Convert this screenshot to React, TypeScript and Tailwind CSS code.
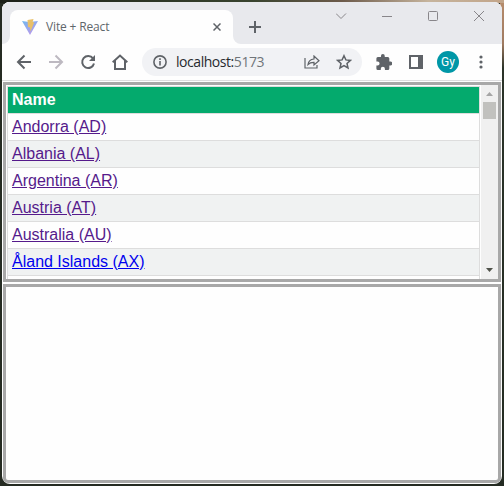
import React from "react";

const countries = [
  { name: "Andorra (AD)", visited: true },
  { name: "Albania (AL)", visited: true },
  { name: "Argentina (AR)", visited: true },
  { name: "Austria (AT)", visited: true },
  { name: "Australia (AU)", visited: true },
  { name: "Åland Islands (AX)", visited: false },
];

function ViteLogo() {
  return (
    <svg width="16" height="16" viewBox="0 0 16 16" className="shrink-0">
      <defs>
        <linearGradient id="v" x1="0" y1="0" x2=".6" y2="1">
          <stop offset="0" stopColor="#72b8ef" />
          <stop offset="1" stopColor="#b99aea" />
        </linearGradient>
      </defs>
      <path d="M0 2 L7 3 L16 2 L8 16 Z" fill="url(#v)" />
      <path d="M5.500 1 L11.500 0 L10.700 3 L12.200 3.500 L8.500 12.500 L8 8.500 L6 8 Z" fill="#e9c069" />
    </svg>
  );
}

function TitleBar() {
  return (
    <div className="flex h-[42px] shrink-0 bg-[#e8e9ed]">
      <div className="h-[42px] w-2 shrink-0 bg-[#fefefe]">
        <div className="h-[42px] w-2 rounded-br-lg bg-[#e8e9ed]" />
      </div>
      <div className="mt-2 flex h-[34px] w-[223px] shrink-0 items-center rounded-t-lg bg-[#fefefe] pl-3 pr-3">
        <ViteLogo />
        <span className="ml-2 flex-1 whitespace-nowrap font-['Open_Sans','Noto_Sans',sans-serif] text-[12px] leading-4 tracking-[-0.15px] text-[#5f666b]">
          Vite + React
        </span>
        <svg width="8" height="8" viewBox="0 0 8 8" stroke="#5f6368" strokeWidth="1.5">
          <path d="M.5 .5 L7.5 7.5 M7.5 .5 L.5 7.5" />
        </svg>
      </div>
      <div className="h-[42px] w-2 shrink-0 bg-[#fefefe]">
        <div className="h-[42px] w-2 rounded-bl-lg bg-[#e8e9ed]" />
      </div>
      <svg width="12" height="12" viewBox="0 0 12 12" stroke="#5f6368" strokeWidth="2" className="ml-2 mt-[19px] shrink-0">
        <path d="M6 0V12M0 6H12" />
      </svg>
      <svg width="150" height="12" viewBox="0 0 150 12" fill="none" stroke="#88868a" className="ml-[75px] mt-2 shrink-0">
        <path d="M0 3.5 L5 8.5 L10 3.5 M46 6.5H56" />
        <rect x="92.5" y="1.500" width="9" height="9" rx="1" />
        <path d="M138 1 L148 11 M148 1 L138 11" />
      </svg>
    </div>
  );
}

function Toolbar() {
  return (
    <div className="flex h-9 shrink-0 items-center bg-[#fefefe] pl-[11px]">
      <svg width="116" height="24" viewBox="13 50 116 24" fill="none" stroke="#5f6368" strokeWidth="2" className="shrink-0">
        <path d="M31 62H18.5 M24.5 55.5L18 62L24.5 68.5" />
        <path d="M49 62H61.5 M55.5 55.5L62 62L55.5 68.5" stroke="#bdb9c1" />
        <path d="M93 58.4A6 6 0 1 0 94 63.5" />
        <path d="M95 55V61H89Z" fill="#5f6368" stroke="none" />
        <path d="M112.700 62.2L120 55.500L127.300 62.2M115 60.500V69H125V60.500" />
      </svg>
      <div className="ml-[13px] flex h-7 w-[220px] shrink-0 items-center rounded-full bg-[#f1f2f5] pl-[11px]">
        <svg width="14" height="14" viewBox="0 0 14 14" fill="none" stroke="#5f6368" strokeWidth="1.6">
          <circle cx="7" cy="7" r="6.1" />
          <path d="M7 6V10.5M7 3.3V4.9" />
        </svg>
        <span className="ml-[9px] whitespace-nowrap font-['Open_Sans','Noto_Sans',sans-serif] text-[14px] leading-5 tracking-[-0.45px] text-[#262a2e]">
          localhost:<span className="text-[#70757a]">5173</span>
        </span>
        <svg width="16" height="14" viewBox="0 0 16 14" fill="none" stroke="#5f6368" strokeWidth="1.2" className="ml-auto">
          <path d="M1 3V13H13V10" />
          <path d="M4 9.5Q4.7 4.5 10 4V1L15 5.7L10 10V7.3Q6.2 7.2 4 9.5Z" />
        </svg>
        <svg width="16" height="16" viewBox="0 0 16 16" fill="none" stroke="#5f6368" strokeWidth="1.5" className="ml-4 mr-[10px]">
          <path d="M8 1.7L9.9 5.9L14.4 6.4L11 9.5L12 14L8 11.6L4 14L5 9.5L1.6 6.4L6.1 5.9Z" />
        </svg>
      </div>
      <svg width="16" height="16" viewBox="2 1 20 21" fill="#5f6368" className="ml-[14px] shrink-0">
        <path d="M20.5 11H19V7a2 2 0 0 0-2-2h-4V3.500a2.500 2.500 0 0 0-5 0V5H4a2 2 0 0 0-2 2v3.800h1.500a2.700 2.700 0 0 1 0 5.400H2V20a2 2 0 0 0 2 2h3.800v-1.500a2.700 2.700 0 0 1 5.400 0V22H17a2 2 0 0 0 2-2v-4h1.500a2.500 2.500 0 0 0 0-5z" />
      </svg>
      <svg width="14" height="14" viewBox="0 0 14 14" className="ml-[17px] shrink-0">
        <path d="M1 1H13V13H1Z" fill="none" stroke="#5f6368" strokeWidth="2" />
        <path d="M9 1H13V13H9Z" fill="#5f6368" />
      </svg>
      <div className="ml-[14px] flex h-[22px] w-[22px] shrink-0 items-center justify-center rounded-full bg-[#0097a7] pb-px font-['Roboto',sans-serif] text-[12px] leading-none text-white">
        Gy
      </div>
      <svg width="4" height="14" viewBox="0 0 4 14" fill="#5f6368" className="ml-5 shrink-0">
        <circle cx="2" cy="2" r="1.6" />
        <circle cx="2" cy="7" r="1.6" />
        <circle cx="2" cy="12" r="1.6" />
      </svg>
    </div>
  );
}

function CountryFrame() {
  return (
    <div className="flex h-[200px] shrink-0 overflow-hidden border-[3px] border-[#a8a8a8] bg-[#fefefe] pl-px font-['Liberation_Sans',Arial,sans-serif] text-[16px]">
      <div className="mt-px h-[193px] w-[473px] shrink-0 overflow-hidden border-x border-t border-[#ddd]">
        <div className="h-[27px] border-b border-[#ddd] bg-[#04aa6d] pl-1 font-bold leading-[26px] text-white">Name</div>
        {countries.map((country) => (
          <div key={country.name} className="h-[27px] border-b border-[#ddd] pl-1 leading-[26px] even:bg-[#fefefe] odd:bg-[#f0f2f2]">
            <a className={country.visited ? "text-[#551a8b] underline" : "text-[#0000ee] underline"}>{country.name}</a>
          </div>
        ))}
      </div>
      <div className="ml-px flex flex-1 flex-col items-center justify-between bg-[#f0f0f0]">
        <div className="flex flex-col items-center">
          <svg width="7" height="4" viewBox="0 0 7 4" className="mt-[7px]">
            <path d="M0 4L3.5 0L7 4Z" fill="#a5a5a5" />
          </svg>
          <div className="mt-[6px] h-[17px] w-[13px] bg-[#c1c1be]" />
        </div>
        <svg width="7" height="4" viewBox="0 0 7 4" className="mb-[7px]">
          <path d="M0 0H7L3.5 4Z" fill="#50524a" />
        </svg>
      </div>
    </div>
  );
}

export default function App() {
  return (
    <div className="h-[486px] w-[504px] overflow-hidden bg-[#252b22] bg-[linear-gradient(90deg,#1c2018_0%,#39442f_50%,#6d5b4b_68%,#c6b49d_85%,#c2a58a_100%),linear-gradient(180deg,#b78c6c_0%,#a07b61_9%,#2b3329_14%,#242b22_100%)] bg-[length:504px_3px,4px_486px] bg-[position:0_0,500px_0] bg-no-repeat px-0.5 pt-0.5">
      <div className="flex h-[482px] flex-col overflow-hidden rounded-lg bg-[#fefefe]">
        <TitleBar />
        <Toolbar />
        <div className="mb-px h-px shrink-0 bg-[#dddddf]" />
        <div className="flex flex-col gap-0.5 px-px">
          <CountryFrame />
          <div className="h-[199px] shrink-0 rounded-b-[5px] border-[3px] border-[#a8a8a8] bg-[#fefefe]" />
        </div>
      </div>
    </div>
  );
}
